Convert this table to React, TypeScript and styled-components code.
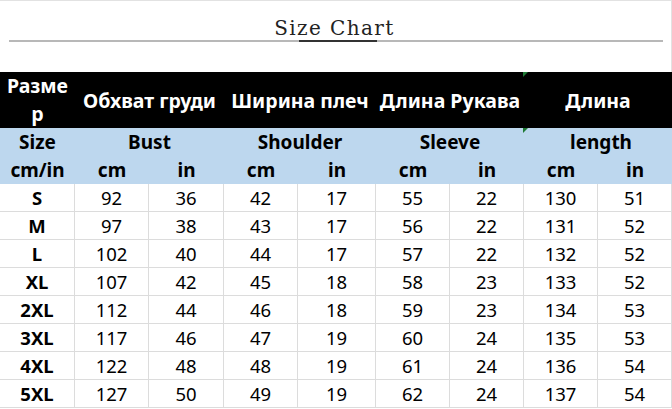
import styled, { createGlobalStyle } from "styled-components";

const GlobalStyle = createGlobalStyle`
	html, body {
		margin: 0;
		padding: 0;
		background: #ffffff;
	}
`;

const colWidths = [75, 74, 75, 74, 78, 74, 74, 74, 74];

const rows = [
	["S", 92, 36, 42, 17, 55, 22, 130, 51],
	["M", 97, 38, 43, 17, 56, 22, 131, 52],
	["L", 102, 40, 44, 17, 57, 22, 132, 52],
	["XL", 107, 42, 45, 18, 58, 23, 133, 52],
	["2XL", 112, 44, 46, 18, 59, 23, 134, 53],
	["3XL", 117, 46, 47, 19, 60, 24, 135, 53],
	["4XL", 122, 48, 48, 19, 61, 24, 136, 54],
	["5XL", 127, 50, 49, 19, 62, 24, 137, 54],
];

const App = () => {
	return (
		<Page>
			<GlobalStyle />
			<TitleBar>
				<Title>Size Chart</Title>
				<Rule>
					<RuleAccent />
				</Rule>
			</TitleBar>
			<Grid>
				<HeadCell>
					<SizeWord>Размер</SizeWord>
				</HeadCell>
				<HeadCell $span={2}>Обхват груди</HeadCell>
				<HeadCell $span={2}>Ширина плеч</HeadCell>
				<HeadCell $span={2}>Длина Рукава</HeadCell>
				<HeadCell $span={2}>
					<Marker />
					Длина
				</HeadCell>

				<BlueCell>Size</BlueCell>
				<BlueCell $span={2}>Bust</BlueCell>
				<BlueCell $span={2}>Shoulder</BlueCell>
				<BlueCell $span={2}>Sleeve</BlueCell>
				<BlueCell $span={2} $shift={6}>
					<Marker />
					length
				</BlueCell>

				<BlueCell>cm/in</BlueCell>
				{["cm", "in", "cm", "in", "cm", "in", "cm", "in"].map((u, i) => (
					<BlueCell key={i}>{u}</BlueCell>
				))}

				{rows.map((r) =>
					r.map((v, i) => (
						<DataCell key={`${r[0]}-${i}`} $bold={i === 0}>
							{v}
						</DataCell>
					))
				)}
			</Grid>
		</Page>
	);
};
export default App;

const Page = styled.div`
	width: 672px;
	height: 409px;
	overflow: hidden;
	background: #ffffff;
	font-family: "Noto Sans", "Open Sans", sans-serif;
	color: #000000;
`;

const TitleBar = styled.div`
	box-sizing: border-box;
	height: 72px;
	border-top: 1px solid #e2e2e2;
	border-right: 1px solid #e2e2e2;
	display: flex;
	flex-direction: column;
	align-items: center;
	padding-top: 15px;
`;

const Title = styled.div`
	font-family: "DejaVu Serif", "Liberation Serif", serif;
	font-size: 20px;
	line-height: 24px;
	color: #222222;
	letter-spacing: 1.4px;
	transform: translateX(-1px);
`;

const Rule = styled.div`
	width: 654px;
	height: 2px;
	background: #b8b8b8;
	display: flex;
`;

const RuleAccent = styled.div`
	margin-left: 290px;
	width: 78px;
	height: 2px;
	background: #333333;
`;

const Grid = styled.div`
	display: grid;
	grid-template-columns: ${colWidths.map((w) => `${w}px`).join(" ")};
	grid-auto-rows: 28px;
`;

const HeadCell = styled.div<{ $span?: number }>`
	position: relative;
	grid-column: span ${(p) => p.$span || 1};
	grid-row: span 2;
	background: #000000;
	color: #ffffff;
	font-weight: 700;
	font-size: 19.5px;
	display: flex;
	align-items: center;
	justify-content: center;
	text-align: center;
	white-space: nowrap;
`;

const SizeWord = styled.span`
	display: block;
	width: 66px;
	line-height: 28px;
	word-break: break-all;
	white-space: normal;
`;

const BlueCell = styled.div<{ $span?: number; $shift?: number }>`
	position: relative;
	grid-column: span ${(p) => p.$span || 1};
	background: #bdd7ee;
	font-weight: 700;
	font-size: 19px;
	display: flex;
	align-items: center;
	justify-content: center;
	padding-left: ${(p) => p.$shift || 0}px;
`;

const Marker = styled.span`
	position: absolute;
	left: -1px;
	top: 0;
	width: 0;
	height: 0;
	border-top: 5px solid #1f7a35;
	border-right: 5px solid transparent;
`;

const DataCell = styled.div<{ $bold?: boolean }>`
	box-sizing: border-box;
	border-right: 1px solid #dcdcdc;
	border-bottom: 1px solid #dcdcdc;
	display: flex;
	align-items: center;
	justify-content: center;
	font-size: 18.5px;
	font-weight: ${(p) => (p.$bold ? 700 : 400)};
`;
